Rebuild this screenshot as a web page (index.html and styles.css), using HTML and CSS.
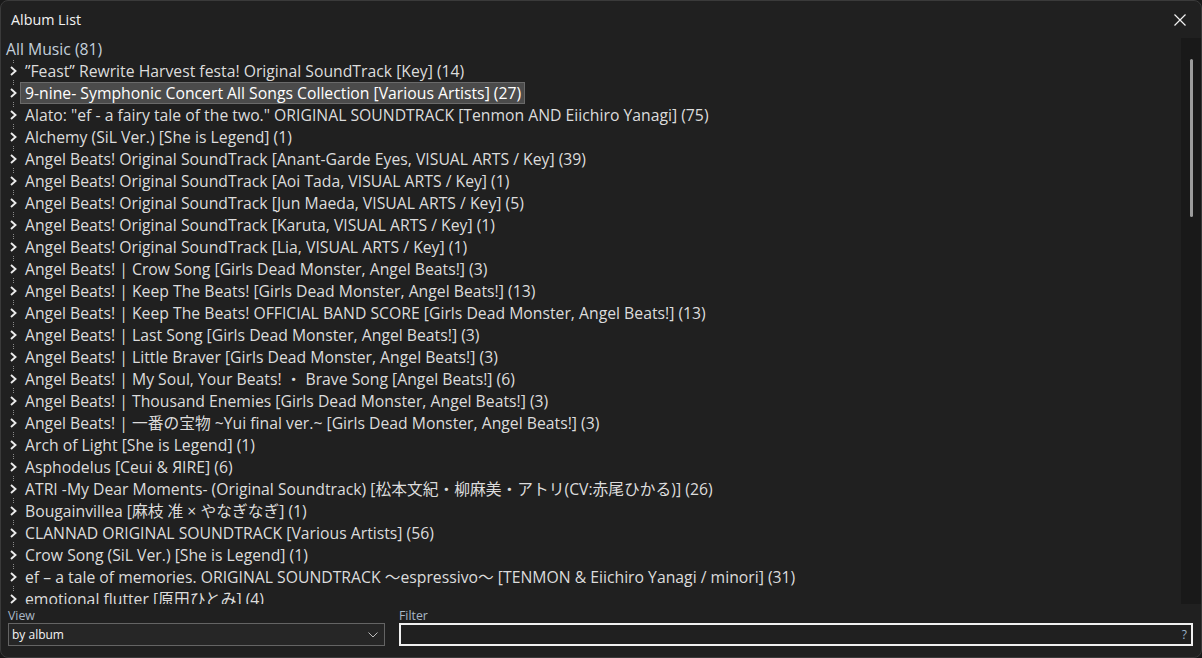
FILE: index.html
```html
<!DOCTYPE html>
<html lang="en">
<head>
<meta charset="utf-8">
<title>Album List</title>
<link rel="stylesheet" href="styles.css">
</head>
<body>
<div class="window">
  <div class="titlebar">
    <span class="title">Album List</span>
    <span class="close" aria-label="Close">
      <svg width="12" height="12" viewBox="0 0 12 12"><path d="M0.5 0.5 L11.5 11.5 M11.5 0.5 L0.5 11.5" stroke="#f2f2f2" stroke-width="1.2" fill="none"/></svg>
    </span>
  </div>
  <div class="tree-wrap">
    <div class="tree">
      <div class="root">All Music (81)</div>
      <div class="items">
        <div class="row"><span class="chev"><svg width="9" height="12" viewBox="0 0 9 12"><path d="M2 2 L6.5 6 L2 10" stroke="#ececec" stroke-width="1.9" fill="none"/></svg></span><span class="label">”Feast” Rewrite Harvest festa! Original SoundTrack [Key] (14)</span></div>
        <div class="row"><span class="chev"><svg width="9" height="12" viewBox="0 0 9 12"><path d="M2 2 L6.5 6 L2 10" stroke="#ececec" stroke-width="1.9" fill="none"/></svg></span><span class="label selected">9-nine- Symphonic Concert All Songs Collection [Various Artists] (27)</span></div>
        <div class="row"><span class="chev"><svg width="9" height="12" viewBox="0 0 9 12"><path d="M2 2 L6.5 6 L2 10" stroke="#ececec" stroke-width="1.9" fill="none"/></svg></span><span class="label">Alato: "ef - a fairy tale of the two." ORIGINAL SOUNDTRACK [Tenmon AND Eiichiro Yanagi] (75)</span></div>
        <div class="row"><span class="chev"><svg width="9" height="12" viewBox="0 0 9 12"><path d="M2 2 L6.5 6 L2 10" stroke="#ececec" stroke-width="1.9" fill="none"/></svg></span><span class="label">Alchemy (SiL Ver.) [She is Legend] (1)</span></div>
        <div class="row"><span class="chev"><svg width="9" height="12" viewBox="0 0 9 12"><path d="M2 2 L6.5 6 L2 10" stroke="#ececec" stroke-width="1.9" fill="none"/></svg></span><span class="label">Angel Beats! Original SoundTrack [Anant-Garde Eyes, VISUAL ARTS / Key] (39)</span></div>
        <div class="row"><span class="chev"><svg width="9" height="12" viewBox="0 0 9 12"><path d="M2 2 L6.5 6 L2 10" stroke="#ececec" stroke-width="1.9" fill="none"/></svg></span><span class="label">Angel Beats! Original SoundTrack [Aoi Tada, VISUAL ARTS / Key] (1)</span></div>
        <div class="row"><span class="chev"><svg width="9" height="12" viewBox="0 0 9 12"><path d="M2 2 L6.5 6 L2 10" stroke="#ececec" stroke-width="1.9" fill="none"/></svg></span><span class="label">Angel Beats! Original SoundTrack [Jun Maeda, VISUAL ARTS / Key] (5)</span></div>
        <div class="row"><span class="chev"><svg width="9" height="12" viewBox="0 0 9 12"><path d="M2 2 L6.5 6 L2 10" stroke="#ececec" stroke-width="1.9" fill="none"/></svg></span><span class="label">Angel Beats! Original SoundTrack [Karuta, VISUAL ARTS / Key] (1)</span></div>
        <div class="row"><span class="chev"><svg width="9" height="12" viewBox="0 0 9 12"><path d="M2 2 L6.5 6 L2 10" stroke="#ececec" stroke-width="1.9" fill="none"/></svg></span><span class="label">Angel Beats! Original SoundTrack [Lia, VISUAL ARTS / Key] (1)</span></div>
        <div class="row"><span class="chev"><svg width="9" height="12" viewBox="0 0 9 12"><path d="M2 2 L6.5 6 L2 10" stroke="#ececec" stroke-width="1.9" fill="none"/></svg></span><span class="label">Angel Beats! | Crow Song [Girls Dead Monster, Angel Beats!] (3)</span></div>
        <div class="row"><span class="chev"><svg width="9" height="12" viewBox="0 0 9 12"><path d="M2 2 L6.5 6 L2 10" stroke="#ececec" stroke-width="1.9" fill="none"/></svg></span><span class="label">Angel Beats! | Keep The Beats! [Girls Dead Monster, Angel Beats!] (13)</span></div>
        <div class="row"><span class="chev"><svg width="9" height="12" viewBox="0 0 9 12"><path d="M2 2 L6.5 6 L2 10" stroke="#ececec" stroke-width="1.9" fill="none"/></svg></span><span class="label">Angel Beats! | Keep The Beats! OFFICIAL BAND SCORE [Girls Dead Monster, Angel Beats!] (13)</span></div>
        <div class="row"><span class="chev"><svg width="9" height="12" viewBox="0 0 9 12"><path d="M2 2 L6.5 6 L2 10" stroke="#ececec" stroke-width="1.9" fill="none"/></svg></span><span class="label">Angel Beats! | Last Song [Girls Dead Monster, Angel Beats!] (3)</span></div>
        <div class="row"><span class="chev"><svg width="9" height="12" viewBox="0 0 9 12"><path d="M2 2 L6.5 6 L2 10" stroke="#ececec" stroke-width="1.9" fill="none"/></svg></span><span class="label">Angel Beats! | Little Braver [Girls Dead Monster, Angel Beats!] (3)</span></div>
        <div class="row"><span class="chev"><svg width="9" height="12" viewBox="0 0 9 12"><path d="M2 2 L6.5 6 L2 10" stroke="#ececec" stroke-width="1.9" fill="none"/></svg></span><span class="label">Angel Beats! | My Soul, Your Beats! ・ Brave Song [Angel Beats!] (6)</span></div>
        <div class="row"><span class="chev"><svg width="9" height="12" viewBox="0 0 9 12"><path d="M2 2 L6.5 6 L2 10" stroke="#ececec" stroke-width="1.9" fill="none"/></svg></span><span class="label">Angel Beats! | Thousand Enemies [Girls Dead Monster, Angel Beats!] (3)</span></div>
        <div class="row"><span class="chev"><svg width="9" height="12" viewBox="0 0 9 12"><path d="M2 2 L6.5 6 L2 10" stroke="#ececec" stroke-width="1.9" fill="none"/></svg></span><span class="label">Angel Beats! | 一番の宝物 ~Yui final ver.~ [Girls Dead Monster, Angel Beats!] (3)</span></div>
        <div class="row"><span class="chev"><svg width="9" height="12" viewBox="0 0 9 12"><path d="M2 2 L6.5 6 L2 10" stroke="#ececec" stroke-width="1.9" fill="none"/></svg></span><span class="label">Arch of Light [She is Legend] (1)</span></div>
        <div class="row"><span class="chev"><svg width="9" height="12" viewBox="0 0 9 12"><path d="M2 2 L6.5 6 L2 10" stroke="#ececec" stroke-width="1.9" fill="none"/></svg></span><span class="label">Asphodelus [Ceui &amp; ЯIRE] (6)</span></div>
        <div class="row"><span class="chev"><svg width="9" height="12" viewBox="0 0 9 12"><path d="M2 2 L6.5 6 L2 10" stroke="#ececec" stroke-width="1.9" fill="none"/></svg></span><span class="label">ATRI -My Dear Moments- (Original Soundtrack) [松本文紀・柳麻美・アトリ(CV:赤尾ひかる)] (26)</span></div>
        <div class="row"><span class="chev"><svg width="9" height="12" viewBox="0 0 9 12"><path d="M2 2 L6.5 6 L2 10" stroke="#ececec" stroke-width="1.9" fill="none"/></svg></span><span class="label">Bougainvillea [麻枝 准 × やなぎなぎ] (1)</span></div>
        <div class="row"><span class="chev"><svg width="9" height="12" viewBox="0 0 9 12"><path d="M2 2 L6.5 6 L2 10" stroke="#ececec" stroke-width="1.9" fill="none"/></svg></span><span class="label">CLANNAD ORIGINAL SOUNDTRACK [Various Artists] (56)</span></div>
        <div class="row"><span class="chev"><svg width="9" height="12" viewBox="0 0 9 12"><path d="M2 2 L6.5 6 L2 10" stroke="#ececec" stroke-width="1.9" fill="none"/></svg></span><span class="label">Crow Song (SiL Ver.) [She is Legend] (1)</span></div>
        <div class="row"><span class="chev"><svg width="9" height="12" viewBox="0 0 9 12"><path d="M2 2 L6.5 6 L2 10" stroke="#ececec" stroke-width="1.9" fill="none"/></svg></span><span class="label">ef – a tale of memories. ORIGINAL SOUNDTRACK 〜espressivo〜 [TENMON &amp; Eiichiro Yanagi / minori] (31)</span></div>
        <div class="row"><span class="chev"><svg width="9" height="12" viewBox="0 0 9 12"><path d="M2 2 L6.5 6 L2 10" stroke="#ececec" stroke-width="1.9" fill="none"/></svg></span><span class="label">emotional flutter [原田ひとみ] (4)</span></div>
      </div>
    </div>
    <div class="scrollbar"><div class="thumb"></div></div>
  </div>
  <div class="bottom">
    <div class="field view">
      <div class="field-label">View</div>
      <div class="select">
        <span>by album</span>
        <svg width="10" height="6" viewBox="0 0 10 6"><path d="M0.5 0.5 L5 5 L9.5 0.5" stroke="#bdbdbd" stroke-width="1" fill="none"/></svg>
      </div>
    </div>
    <div class="field filter">
      <div class="field-label">Filter</div>
      <div class="input"><span class="help">?</span></div>
    </div>
  </div>
</div>
</body>
</html>
```

FILE: styles.css
```css
html, body {
  margin: 0;
  padding: 0;
  background: #191919;
  width: 1202px;
  height: 658px;
  overflow: hidden;
}

.window {
  box-sizing: border-box;
  width: 1202px;
  height: 658px;
  background: #202020;
  border: 1px solid #3a3a3a;
  border-radius: 8px;
  display: flex;
  flex-direction: column;
  font-family: "Open Sans", "Noto Sans CJK JP", sans-serif;
  color: #dcdcdc;
  overflow: hidden;
}

.titlebar {
  height: 37px;
  display: flex;
  align-items: center;
  justify-content: space-between;
  padding: 0 15px 0 10px;
  flex: none;
}

.title {
  font-size: 14.3px;
  color: #f2f2f2;
}

.close {
  display: flex;
  width: 12px;
  height: 12px;
}

.tree-wrap {
  height: 566px;
  display: flex;
  flex: none;
}

.tree {
  flex: 1;
  overflow: hidden;
}

.root {
  height: 22px;
  line-height: 23px;
  padding-left: 5px;
  font-size: 15.75px;
  color: #c3cfdb;
}

.items {
  background-image: repeating-linear-gradient(to bottom, #8a8a8a 0, #8a8a8a 1px, transparent 1px, transparent 2px);
  background-size: 1px 100%;
  background-repeat: no-repeat;
  background-position: 12px 0;
}

.row {
  height: 22px;
  display: flex;
  align-items: center;
  white-space: nowrap;
}

.chev {
  width: 19px;
  height: 16px;
  flex: none;
  display: flex;
  align-items: center;
  background: linear-gradient(to right, transparent 7px, #202020 7px, #202020 18px, transparent 18px);
}

.chev svg {
  margin-left: 8px;
}

.label {
  font-size: 15.75px;
  line-height: 20px;
  padding: 0 3px 0 4px;
  border: 1px solid transparent;
  color: #dcdcdc;
}

.label.selected {
  background: #4b4b4b;
  border-color: #6a6a6a;
  color: #ffffff;
}

.scrollbar {
  width: 20px;
  flex: none;
  background: #191919;
}

.thumb {
  width: 3px;
  height: 158px;
  margin: 21px 0 0 9px;
  background: #9c9c9c;
  border-radius: 1.5px;
}

.bottom {
  flex: 1;
  display: flex;
  gap: 14px;
  padding: 5px 8px 0 7px;
}

.field {
  display: flex;
  flex-direction: column;
}

.field.view {
  width: 377px;
}

.field.filter {
  flex: 1;
}

.field-label {
  font-size: 12.3px;
  line-height: 14px;
  color: #a9b8c6;
}

.select {
  box-sizing: border-box;
  height: 23px;
  border: 1px solid #646464;
  background: #262626;
  display: flex;
  align-items: center;
  justify-content: space-between;
  padding: 0 6px 0 3px;
  font-size: 12px;
  color: #f4f4f4;
}

.input {
  box-sizing: border-box;
  height: 23px;
  border: 2px solid #f0f0f0;
  background: #202020;
  display: flex;
  align-items: center;
  justify-content: flex-end;
  padding: 0 4px;
}

.help {
  font-size: 12px;
  color: #9cb3c9;
}
```
